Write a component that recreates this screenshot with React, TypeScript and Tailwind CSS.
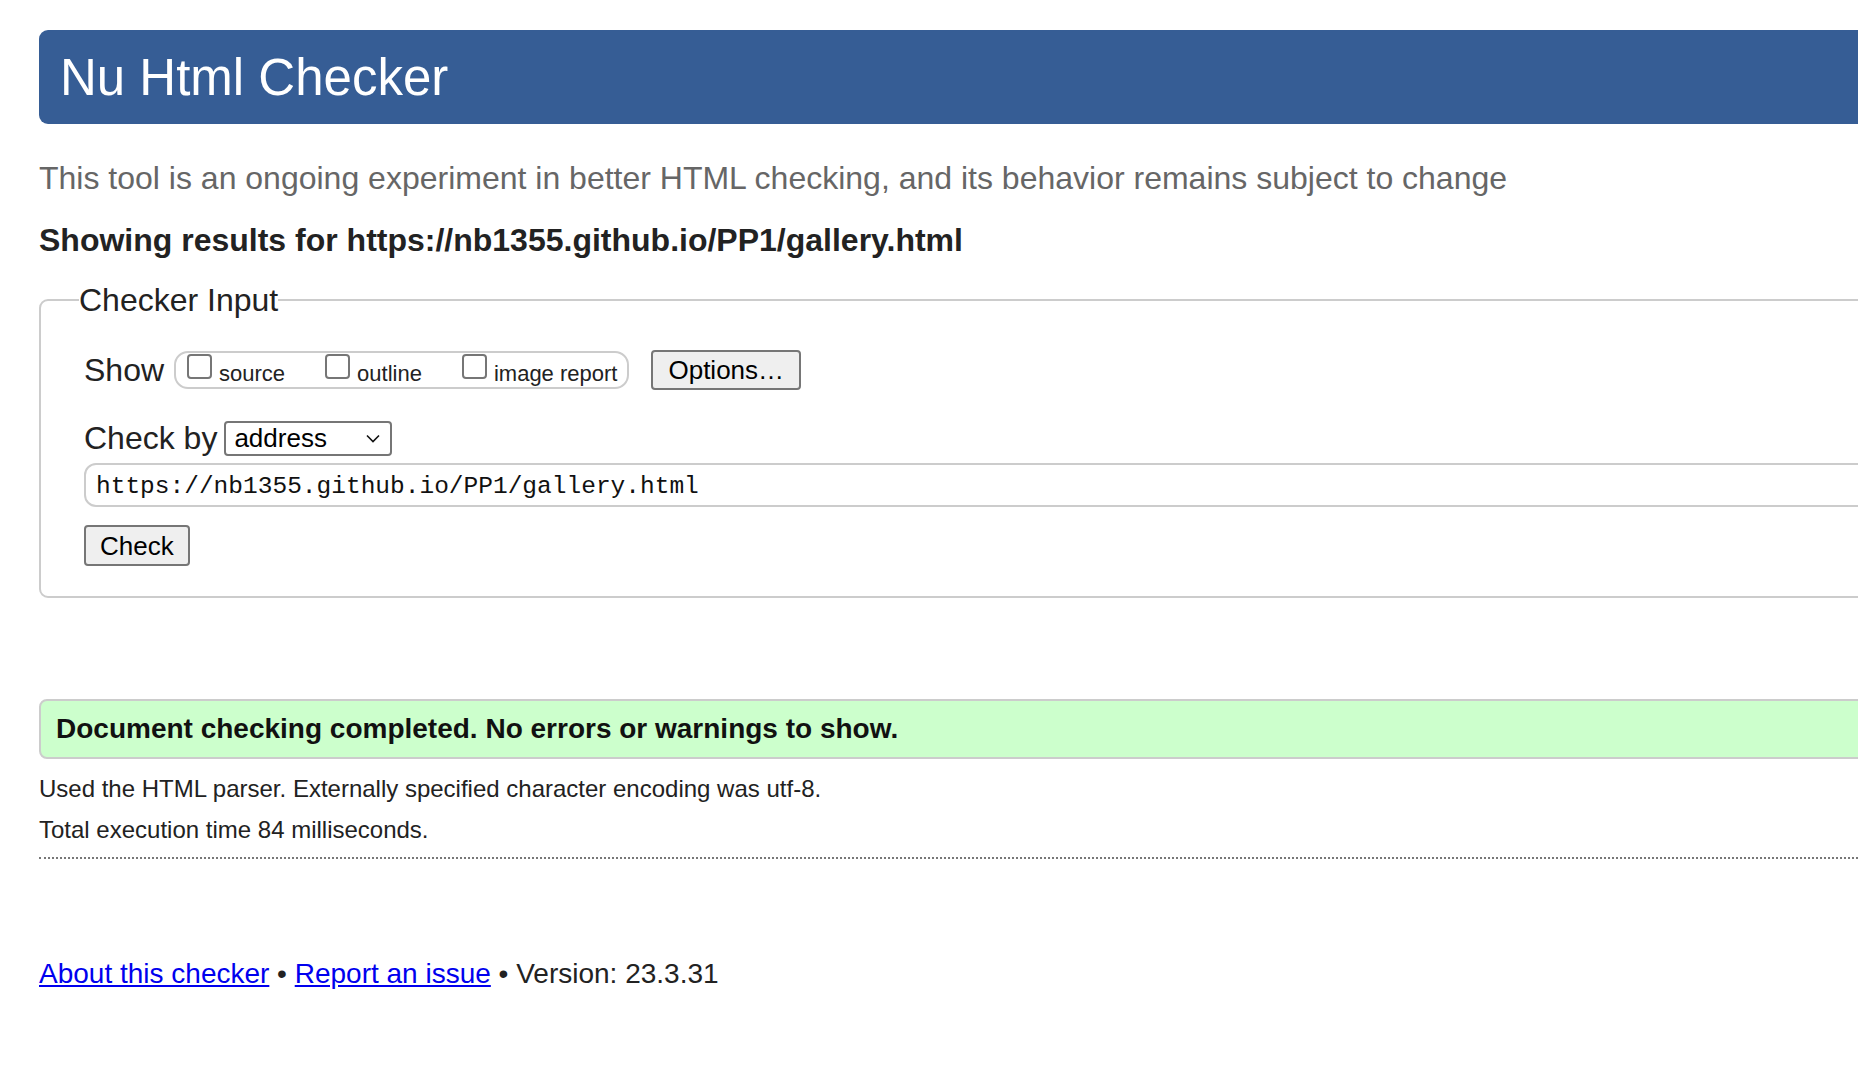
import React from 'react';

const sans = "font-['Liberation_Sans',Arial,sans-serif]";

const Box: React.FC<{ label: string }> = ({ label }) => (
  <label className="flex items-start">
    <input
      type="checkbox"
      className="appearance-none w-[25px] h-[25px] border-2 border-[#767676] rounded-[4px] bg-white"
    />
    <span className="ml-[7px] mt-[6px] text-[22px] leading-[28px] text-[#222]">{label}</span>
  </label>
);

export default function App() {
  return (
    <div className={`min-h-screen bg-white overflow-hidden ${sans}`}>
      <div className="pl-[39px] pt-[30px] w-[calc(100%+60px)]">
        <header className="h-[94px] rounded-[9px] bg-[#365d95] flex items-center pl-[21px]">
          <h1 className="text-[51px] leading-none text-white">Nu Html Checker</h1>
        </header>

        <p className="mt-[34px] text-[32px] leading-[40px] text-[#666]">
          This tool is an ongoing experiment in better HTML checking, and its behavior remains subject to change
        </p>

        <h2 className="mt-[22px] text-[32px] leading-[40px] font-bold text-[#222]">
          Showing results for https://nb1355.github.io/PP1/gallery.html
        </h2>

        <fieldset className="mt-[20px] border-2 border-[#cccccc] rounded-[9px] pl-[43px] pt-[30px] pb-[30px]">
          <legend className="-ml-[5px] text-[32px] leading-[40px] text-[#222]">Checker Input</legend>

          {/* show options */}
          <div className="flex items-center h-[40px]">
            <span className="text-[32px] leading-[40px] text-[#222]">Show</span>
            <div className="ml-[10px] h-[38px] border-2 border-[#cccccc] rounded-[14px] flex items-start pt-[1px] gap-[40px] pl-[11px] pr-[10px]">
              <Box label="source" />
              <Box label="outline" />
              <Box label="image report" />
            </div>
            <button
              type="button"
              className="ml-[22px] h-[40px] px-[15px] border-2 border-[#767676] rounded-[4px] bg-[#efefef] text-[26px] leading-none text-black"
            >
              Options…
            </button>
          </div>

          {/* check by */}
          <div className="mt-[28px] flex items-center h-[40px]">
            <span className="text-[32px] leading-[40px] text-[#222]">Check by</span>
            <div className="ml-[7px] w-[168px] h-[35px] border-2 border-[#767676] rounded-[4px] bg-white flex items-center justify-between pl-[8px] pr-[10px]">
              <span className="text-[26px] leading-none text-black">address</span>
              <svg width="14" height="9" viewBox="0 0 14 9" fill="none" stroke="#111" strokeWidth="1.6">
                <path d="M1 1.5 L7 7.5 L13 1.5" />
              </svg>
            </div>
          </div>

          <div className="mt-[5px] h-[44px] border-2 border-[#cccccc] rounded-[12px] flex items-center pl-[10px] pt-[5px]">
            <span className="font-['Liberation_Mono','DejaVu_Sans_Mono',monospace] text-[24.5px] leading-none text-[#111]">
              https://nb1355.github.io/PP1/gallery.html
            </span>
          </div>

          <button
            type="button"
            className="mt-[18px] h-[41px] px-[14px] border-2 border-[#767676] rounded-[4px] bg-[#efefef] text-[26px] leading-none text-black"
          >
            Check
          </button>
        </fieldset>

        <div className="mt-[101px] h-[60px] border-2 border-[#cccccc] rounded-[8px] bg-[#ccffcc] flex items-center pl-[15px]">
          <p className="text-[28px] leading-none font-bold text-[#111]">
            Document checking completed. No errors or warnings to show.
          </p>
        </div>

        <p className="mt-[14px] text-[24px] leading-[32px] text-[#222]">
          Used the HTML parser. Externally specified character encoding was utf-8.
        </p>
        <p className="mt-[9px] text-[24px] leading-[32px] text-[#222]">Total execution time 84 milliseconds.</p>

        <hr className="mt-[11px] border-0 border-t-2 border-dotted border-[#777]" />

        <p className="mt-[97px] text-[28px] leading-[36px] text-[#222]">
          <a href="#" className="text-[#0000ee] underline">About this checker</a> •{' '}
          <a href="#" className="text-[#0000ee] underline">Report an issue</a> • Version: 23.3.31
        </p>
      </div>
    </div>
  );
}
